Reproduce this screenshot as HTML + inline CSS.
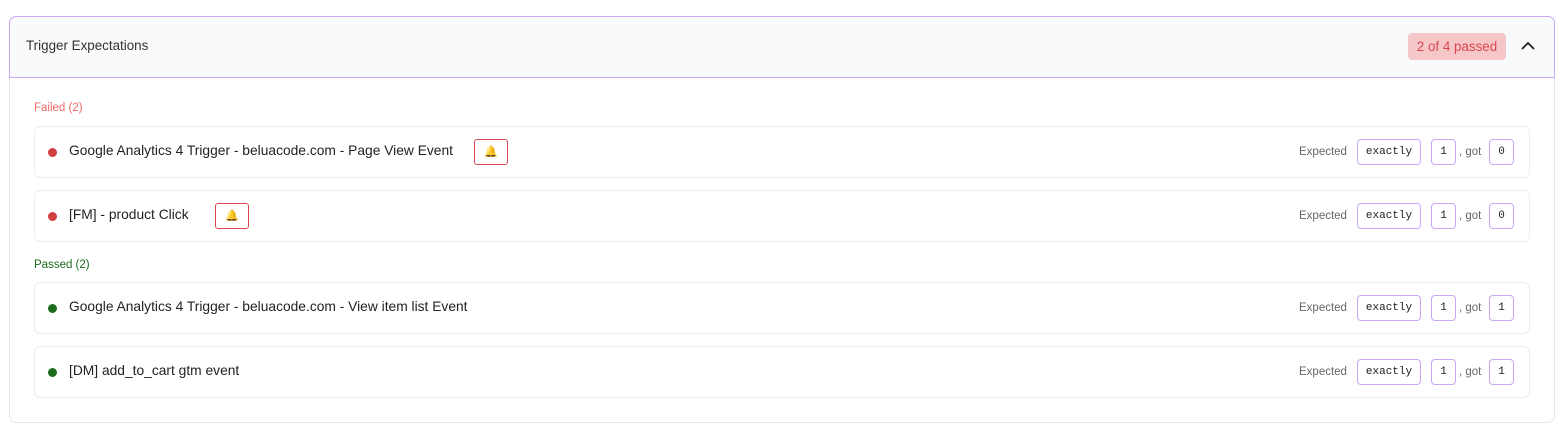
<!DOCTYPE html>
<html><head><style>
body{margin:0;background:#fff;font-family:"Liberation Sans",sans-serif;width:1564px;height:439px;position:relative;overflow:hidden}
.card{position:absolute;left:9px;top:16px;width:1546px;height:407px;border:1px solid #e6e6ea;border-radius:7px;box-sizing:border-box}
.hdr{position:absolute;left:9px;top:16px;width:1546px;height:62px;background:#f9fafb;border:1px solid #c9a9f6;border-radius:7px 7px 0 0;box-sizing:border-box}
.ht{position:absolute;left:16px;top:21px;font-size:13.4px;color:#333}
.badge{position:absolute;left:1398px;top:16px;width:98px;height:27px;background:#f6c7c9;border-radius:4px;color:#d9474e;font-size:13.4px;line-height:27px;text-align:center}
.lbl{position:absolute;left:34px;font-size:11.5px}
.row{position:absolute;left:34px;width:1496px;height:52px;border:1px solid #ececef;border-radius:6px;box-sizing:border-box}
.dot{position:absolute;left:13px;top:21px;width:9px;height:9px;border-radius:50%}
.nm{position:absolute;left:34px;top:16px;font-size:13.8px;color:#222}
.bell{position:absolute;top:12px;width:34px;height:26px;border:1px solid #d9474e;border-radius:3px;box-sizing:border-box;font-size:11px;text-align:center;line-height:24px;color:#f3b33a}
.exp{position:absolute;left:1264px;top:19px;font-size:11.5px;color:#666}
.box{position:absolute;top:12px;height:26px;border:1px solid #c9a9f6;border-radius:4px;box-sizing:border-box;font-family:"Liberation Mono",monospace;font-size:11px;line-height:24px;text-align:center;color:#222}
.got{position:absolute;left:1424px;top:19px;font-size:11.5px;color:#666}
</style></head><body>
<div class="card"></div>
<div class="hdr"><div class="ht">Trigger Expectations</div><div class="badge">2 of 4 passed</div>
<svg style="position:absolute;left:1510px;top:23px" width="16" height="12" viewBox="0 0 16 12"><path d="M2 9 L8 3 L14 9" fill="none" stroke="#222" stroke-width="1.8"/></svg></div>
<div class="lbl" style="top:102px;color:#f06a6a">Failed (2)</div>
<div class="lbl" style="top:259px;color:#1d6b1d">Passed (2)</div>

<div class="row" style="top:126px"><div class="dot" style="background:#d04040"></div><div class="nm">Google Analytics 4 Trigger - beluacode.com - Page View Event</div><div class="bell" style="left:439px">🔔</div>
<div class="exp">Expected</div><div class="box" style="left:1322px;width:64px">exactly</div><div class="box" style="left:1396px;width:25px">1</div><div class="got">, got</div><div class="box" style="left:1454px;width:25px">0</div></div>

<div class="row" style="top:190px"><div class="dot" style="background:#d04040"></div><div class="nm">[FM] - product Click</div><div class="bell" style="left:180px">🔔</div>
<div class="exp">Expected</div><div class="box" style="left:1322px;width:64px">exactly</div><div class="box" style="left:1396px;width:25px">1</div><div class="got">, got</div><div class="box" style="left:1454px;width:25px">0</div></div>

<div class="row" style="top:282px"><div class="dot" style="background:#1d6b1d"></div><div class="nm">Google Analytics 4 Trigger - beluacode.com - View item list Event</div>
<div class="exp">Expected</div><div class="box" style="left:1322px;width:64px">exactly</div><div class="box" style="left:1396px;width:25px">1</div><div class="got">, got</div><div class="box" style="left:1454px;width:25px">1</div></div>

<div class="row" style="top:346px"><div class="dot" style="background:#1d6b1d"></div><div class="nm">[DM] add_to_cart gtm event</div>
<div class="exp">Expected</div><div class="box" style="left:1322px;width:64px">exactly</div><div class="box" style="left:1396px;width:25px">1</div><div class="got">, got</div><div class="box" style="left:1454px;width:25px">1</div></div>
</body></html>
